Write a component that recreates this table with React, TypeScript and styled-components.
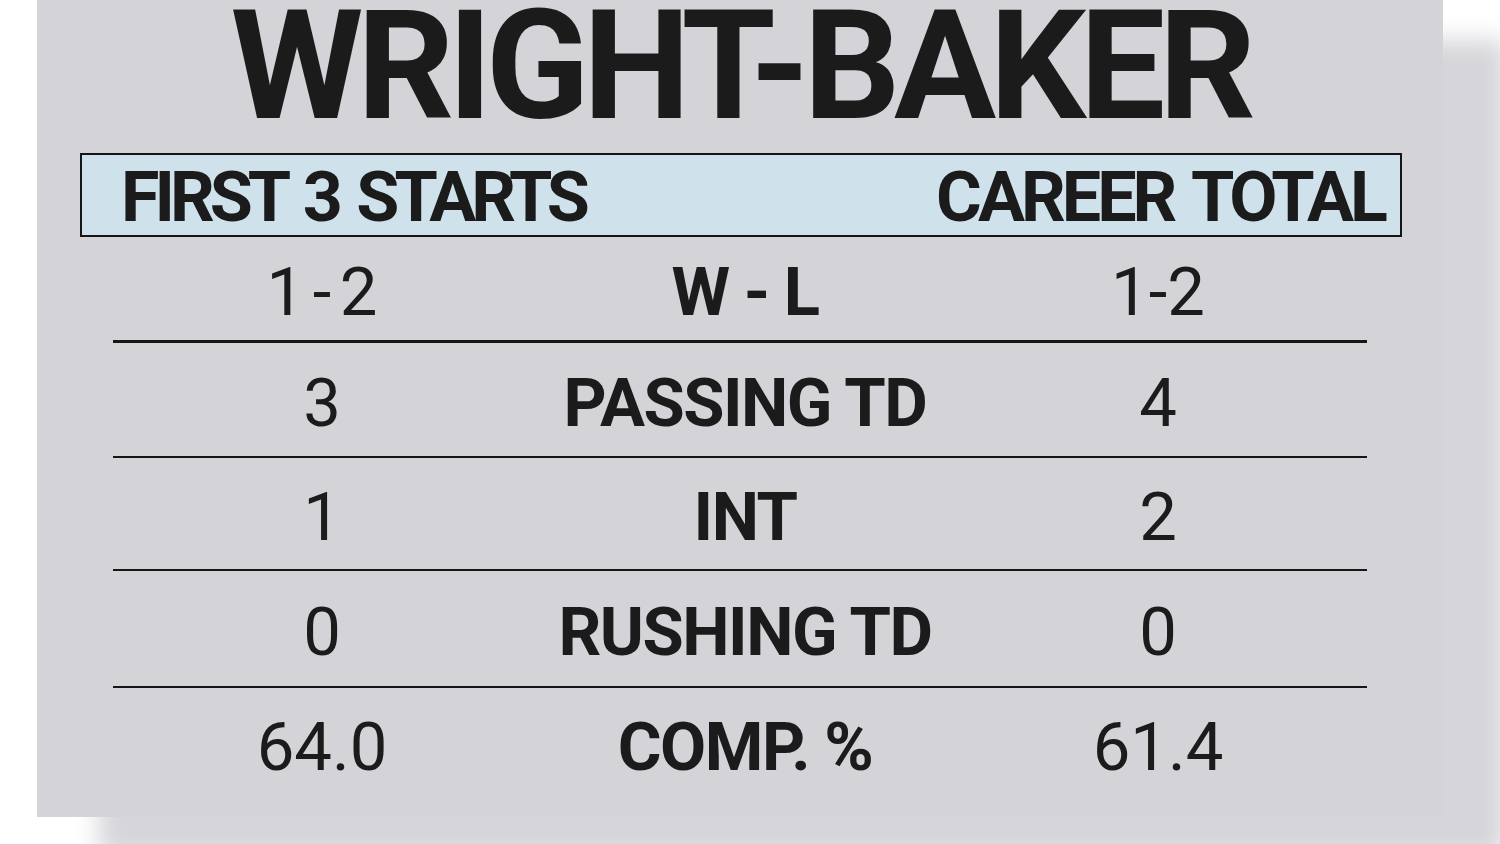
import React from "react";
import styled, { createGlobalStyle } from "styled-components";

const GlobalStyle = createGlobalStyle`
  html, body {
    margin: 0;
    padding: 0;
    background: #ffffff;
    font-family: Roboto, "Liberation Sans", sans-serif;
  }
`;

const Page = styled.div`
  width: 1500px;
  height: 844px;
  overflow: hidden;
  box-sizing: border-box;
  padding-left: 37px;
`;

const Card = styled.section`
  width: 1406px;
  height: 817px;
  background: #d4d4d8;
  box-shadow: 62px 40px 22px rgba(50, 50, 70, 0.2);
  display: flex;
  flex-direction: column;
  color: #1b1b1c;
`;

const Title = styled.h1`
  margin: 2px 0 22px;
  text-align: center;
  font-family: Roboto, "Liberation Sans", sans-serif;
  font-weight: 700;
  font-size: 152px;
  line-height: 0.85;
  letter-spacing: -6.5px;
`;

const HeaderBar = styled.div`
  margin: 0 41px 0 43px;
  height: 84px;
  box-sizing: border-box;
  border: 2px solid #161616;
  background: #cfe2ec;
  display: flex;
  align-items: center;
  justify-content: space-between;
  padding: 3px 16px 0 39px;
`;

const HeaderLabel = styled.span<{ $spacing: number }>`
  font-weight: 700;
  font-size: 70px;
  line-height: 1;
  letter-spacing: ${(p) => p.$spacing}px;
  word-spacing: 6px;
`;

const Table = styled.div`
  margin: 0 76px;
  display: flex;
  flex-direction: column;
`;

const Row = styled.div<{ $h: number; $b: number; $last?: boolean }>`
  display: grid;
  grid-template-columns: 1fr 1fr 1fr;
  align-items: center;
  box-sizing: border-box;
  height: ${(p) => p.$h}px;
  padding: ${(p) => (p.$last ? "0 0 4px" : "8px 0 0")};
  border-bottom: ${(p) => p.$b}px solid #161616;
`;

const Value = styled.div`
  text-align: center;
  font-weight: 400;
  font-size: 67px;
  line-height: 1;
  word-spacing: -8px;
`;

const Label = styled.div`
  text-align: center;
  font-weight: 700;
  font-size: 67px;
  line-height: 1;
  letter-spacing: -1.5px;
  padding-left: 10px;
`;

const rows = [
  { left: "1 - 2", label: "W - L", right: "1-2", h: 106, b: 3 },
  { left: "3", label: "PASSING TD", right: "4", h: 115, b: 2 },
  { left: "1", label: "INT", right: "2", h: 113, b: 2 },
  { left: "0", label: "RUSHING TD", right: "0", h: 117, b: 2 },
  { left: "64.0", label: "COMP. %", right: "61.4", h: 122, b: 0 },
];

export default function App() {
  return (
    <Page>
      <GlobalStyle />
      <Card>
        <Title>WRIGHT-BAKER</Title>
        <HeaderBar>
          <HeaderLabel $spacing={-5}>FIRST 3 STARTS</HeaderLabel>
          <HeaderLabel $spacing={-4}>CAREER TOTAL</HeaderLabel>
        </HeaderBar>
        <Table>
          {rows.map((r, i) => (
            <Row key={r.label} $h={r.h} $b={r.b} $last={i === rows.length - 1}>
              <Value>{r.left}</Value>
              <Label>{r.label}</Label>
              <Value>{r.right}</Value>
            </Row>
          ))}
        </Table>
      </Card>
    </Page>
  );
}
